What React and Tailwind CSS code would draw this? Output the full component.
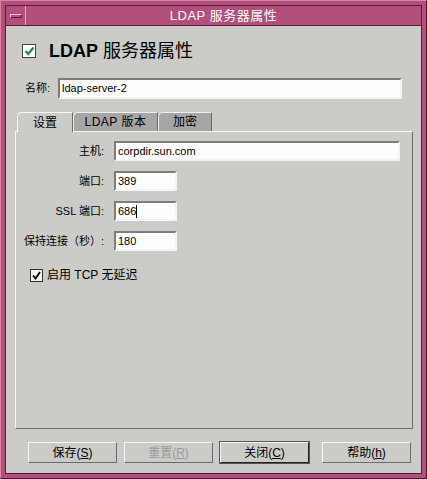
import React from 'react'

const inset = 'bg-[#fdfdfd] border-2 border-t-[#7c7c7c] border-l-[#7c7c7c] border-b-[#f4f4f4] border-r-[#f4f4f4] text-[11px] text-black px-[2px] flex items-center'

function Field({ label, value, w, caret }) {
  return (
    <div className="flex items-center h-[20px]">
      <div className="w-[88px] text-right text-[11px] text-black">{label}</div>
      <div className={`${inset} ml-[10px] h-[20px]`} style={{ width: w }}>
        {value}
        {caret && <span className="inline-block w-px h-[13px] bg-black"></span>}
      </div>
    </div>
  )
}

function Btn({ children, def, disabled }) {
  return (
    <div className={`w-[89px] h-[21px] flex items-center justify-center text-[12px] bg-[#cbccc8] border border-t-[#f6f6f6] border-l-[#f6f6f6] ${def ? 'border-r-[#222] border-b-[#222] outline outline-1 outline-[#555]' : 'border-r-[#6a6a6a] border-b-[#6a6a6a]'} ${disabled ? 'text-[#9a9a9a]' : 'text-black'}`}>
      {children}
    </div>
  )
}

export default function App() {
  return (
    <div className="w-[427px] h-[479px] bg-[#b24f7c] border border-t-[#d9879f] border-l-[#d9879f] border-r-[#4e1333] border-b-[#4e1333] p-[4px] font-['Liberation_Sans','Noto_Sans_CJK_SC',sans-serif]">
      <div className="w-full h-full flex flex-col border border-[#5a1a3e]">
        {/* title bar */}
        <div className="h-[20px] flex border-b border-[#5a1a3e]">
          <div className="w-[20px] h-full border-r border-[#e7a7c4] flex items-center justify-center">
            <div className="w-[12px] h-[4px] border border-t-[#f3c8db] border-l-[#f3c8db] border-r-[#5a1a3e] border-b-[#5a1a3e]"></div>
          </div>
          <div className="flex-1 flex items-center justify-center text-white text-[13px] tracking-[0.5px]">LDAP 服务器属性</div>
        </div>

        {/* content */}
        <div className="flex-1 bg-[#cbccc8] flex flex-col">
          <div className="mt-[14px] ml-[16px] h-[22px] flex items-center">
            <div className="w-[14px] h-[14px] bg-white border border-[#444] flex items-center justify-center">
              <svg width="11" height="10" viewBox="0 0 11 10"><path d="M1.5 5 L4.2 8 L9.5 1.5" fill="none" stroke="#1f8d5b" strokeWidth="2.2" /></svg>
            </div>
            <div className="ml-[13px] text-[18px] text-black leading-none"><span className="font-bold">LDAP</span> 服务器属性</div>
          </div>

          <div className="mt-[16px] ml-[19px] h-[21px] flex items-center">
            <div className="w-[33px] text-[11px] text-black">名称:</div>
            <div className={`${inset} w-[344px] h-[21px]`}>ldap-server-2</div>
          </div>

          {/* tabs */}
          <div className="mt-[13px] ml-[11px] flex h-[19px] relative z-10">
            <div className="w-[56px] h-[20px] bg-[#cbccc8] border-t border-l border-[#f6f6f6] border-r border-r-[#6a6a6a] rounded-tl-[5px] flex items-center justify-center text-[12px] text-black">设置</div>
            <div className="w-[85px] h-[19px] bg-[#a6a6a6] border-t border-l border-[#f0f0f0] border-r border-r-[#6a6a6a] rounded-tl-[5px] flex items-center justify-center text-[12px] text-black tracking-[0.5px]">LDAP 版本</div>
            <div className="w-[54px] h-[19px] bg-[#a6a6a6] border-t border-l border-[#f0f0f0] border-r border-r-[#6a6a6a] rounded-tl-[5px] flex items-center justify-center text-[12px] text-black">加密</div>
          </div>
          <div className="ml-[9px] w-[398px] h-[298px] border border-t-[#f6f6f6] border-l-[#f6f6f6] border-r-[#6a6a6a] border-b-[#6a6a6a] pt-[9px] flex flex-col gap-[10px]">
            <Field label="主机:" value="corpdir.sun.com" w={286} />
            <Field label="端口:" value="389" w={63} />
            <Field label="SSL 端口:" value="686" w={63} caret />
            <Field label="保持连接（秒）:" value="180" w={63} />
            <div className="ml-[14px] mt-[7px] flex items-center h-[14px]">
              <div className="w-[13px] h-[13px] bg-[#f2f2f2] border border-[#333] flex items-center justify-center">
                <svg width="9" height="9" viewBox="0 0 9 9"><path d="M1 4.5 L3.5 7.5 L8 1" fill="none" stroke="#000" strokeWidth="1.8" /></svg>
              </div>
              <div className="ml-[4px] text-[12px] text-black">启用 TCP 无延迟</div>
            </div>
          </div>

          <div className="mt-[13px] ml-[22px] flex">
            <Btn>保存(<u>S</u>)</Btn>
            <div className="ml-[7px]"><Btn disabled>重置(<u>R</u>)</Btn></div>
            <div className="ml-[7px]"><Btn def>关闭(<u>C</u>)</Btn></div>
            <div className="ml-[13px]"><Btn>帮助(<u>h</u>)</Btn></div>
          </div>
        </div>
      </div>
    </div>
  )
}
